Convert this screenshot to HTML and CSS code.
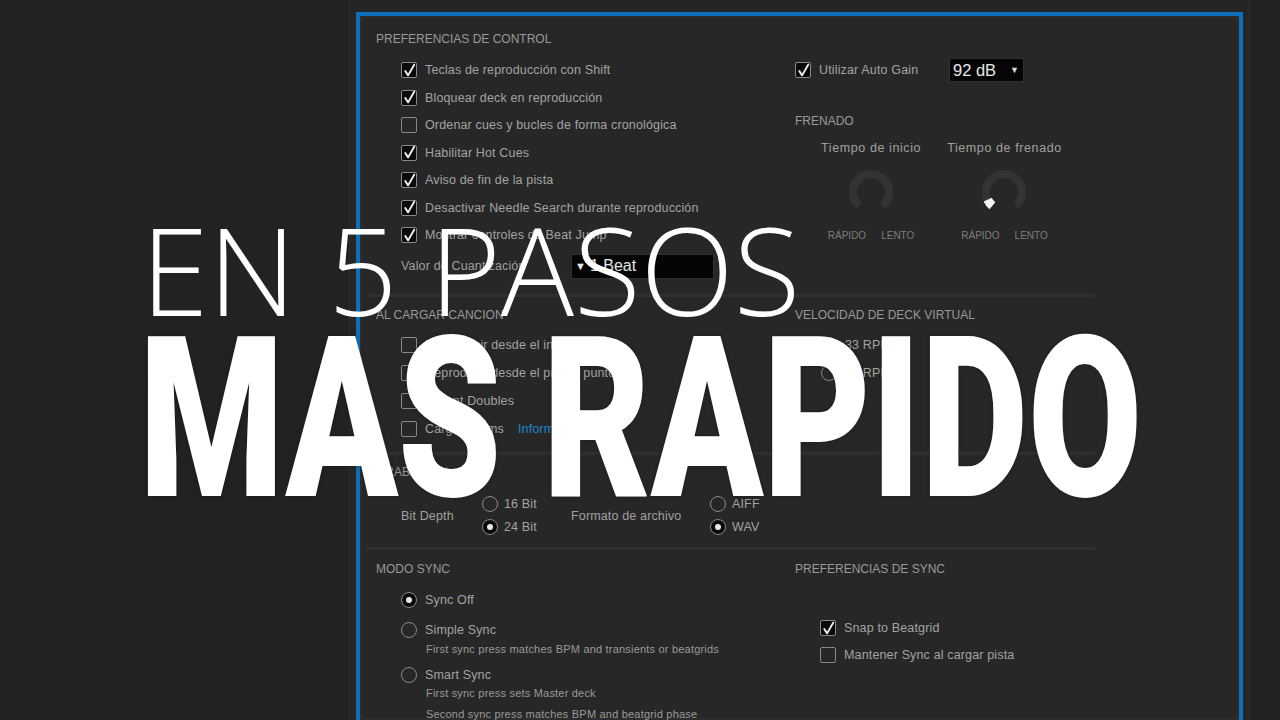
FILE: index.html
```html
<!DOCTYPE html>
<html lang="es">
<head>
<meta charset="utf-8">
<title>Preferencias</title>
<link rel="stylesheet" href="styles.css">
</head>
<body>
<div class="app">
  <div class="side"></div>
  <div class="main">
    <div class="panel">

      <section class="sec sec1">
        <div class="col left">
          <h3 class="hd">PREFERENCIAS DE CONTROL</h3>
          <ul class="opts">
            <li class="row"><span class="cb on"><svg viewBox="0 0 16 16"><polyline points="3.5,8.5 6.5,13.2 13,1.8"/></svg></span>Teclas de reproducción con Shift</li>
            <li class="row"><span class="cb on"><svg viewBox="0 0 16 16"><polyline points="3.5,8.5 6.5,13.2 13,1.8"/></svg></span>Bloquear deck en reproducción</li>
            <li class="row"><span class="cb"></span>Ordenar cues y bucles de forma cronológica</li>
            <li class="row"><span class="cb on"><svg viewBox="0 0 16 16"><polyline points="3.5,8.5 6.5,13.2 13,1.8"/></svg></span>Habilitar Hot Cues</li>
            <li class="row"><span class="cb on"><svg viewBox="0 0 16 16"><polyline points="3.5,8.5 6.5,13.2 13,1.8"/></svg></span>Aviso de fin de la pista</li>
            <li class="row"><span class="cb on"><svg viewBox="0 0 16 16"><polyline points="3.5,8.5 6.5,13.2 13,1.8"/></svg></span>Desactivar Needle Search durante reproducción</li>
            <li class="row"><span class="cb on"><svg viewBox="0 0 16 16"><polyline points="3.5,8.5 6.5,13.2 13,1.8"/></svg></span>Mostrar controles de Beat Jump</li>
          </ul>
          <div class="quant">
            <span class="qlabel">Valor de Cuantización</span>
            <span class="select wide"><span class="arr2">▼</span> 1 Beat</span>
          </div>
        </div>
        <div class="col right">
          <div class="autogain">
            <span class="cb on"><svg viewBox="0 0 16 16"><polyline points="3.5,8.5 6.5,13.2 13,1.8"/></svg></span>
            <span class="aglabel">Utilizar Auto Gain</span>
            <span class="select db"><span>92 dB</span><span class="arr">▼</span></span>
          </div>
          <h3 class="hd fren">FRENADO</h3>
          <div class="knobs">
            <div class="knob">
              <div class="ktitle">Tiempo de inicio</div>
              <svg class="kdial" viewBox="0 0 48 48"><path class="ring" d="M12.43 37.79 A18 18 0 1 1 35.57 37.79"/></svg>
              <div class="klabels"><span>RÁPIDO</span><span>LENTO</span></div>
            </div>
            <div class="knob">
              <div class="ktitle">Tiempo de frenado</div>
              <svg class="kdial" viewBox="0 0 48 48"><path class="ring" d="M12.43 37.79 A18 18 0 1 1 35.57 37.79"/><path class="ind" d="M12.43 37.79 A18 18 0 0 1 7.69 31.61"/></svg>
              <div class="klabels"><span>RÁPIDO</span><span>LENTO</span></div>
            </div>
          </div>
        </div>
      </section>
      <div class="sep"></div>

      <section class="sec sec2">
        <div class="col left">
          <h3 class="hd">AL CARGAR CANCION</h3>
          <ul class="opts">
            <li class="row r28"><span class="cb"></span>Reproducir desde el inicio</li>
            <li class="row r28"><span class="cb"></span>Reproducir desde el primer punto cue</li>
            <li class="row r28"><span class="cb"></span>Instant Doubles</li>
            <li class="row r28"><span class="cb"></span>Cargar Stems <a class="link">Información</a></li>
          </ul>
        </div>
        <div class="col right">
          <h3 class="hd">VELOCIDAD DE DECK VIRTUAL</h3>
          <ul class="opts ind26">
            <li class="row r28"><span class="rb"></span>33 RPM</li>
            <li class="row r28"><span class="rb"></span>45 RPM</li>
          </ul>
        </div>
      </section>
      <div class="sep"></div>

      <section class="sec sec3">
        <h3 class="hd">GRABACIÓN</h3>
        <div class="rec">
          <span class="reclabel bd">Bit Depth</span>
          <div class="rgroup g1">
            <div class="row r23"><span class="rb"></span>16 Bit</div>
            <div class="row r23"><span class="rb on"></span>24 Bit</div>
          </div>
          <span class="reclabel fm">Formato de archivo</span>
          <div class="rgroup">
            <div class="row r23"><span class="rb"></span>AIFF</div>
            <div class="row r23"><span class="rb on"></span>WAV</div>
          </div>
        </div>
      </section>
      <div class="sep"></div>

      <section class="sec sec4">
        <div class="col left">
          <h3 class="hd">MODO SYNC</h3>
          <div class="sync">
            <div class="row r26 s-off"><span class="rb on"></span>Sync Off</div>
            <div class="row r26 s-simple"><span class="rb"></span>Simple Sync</div>
            <p class="desc d1">First sync press matches BPM and transients or beatgrids</p>
            <div class="row r26 s-smart"><span class="rb"></span>Smart Sync</div>
            <p class="desc d2">First sync press sets Master deck</p>
            <p class="desc d3">Second sync press matches BPM and beatgrid phase</p>
          </div>
        </div>
        <div class="col right">
          <h3 class="hd">PREFERENCIAS DE SYNC</h3>
          <div class="syncprefs">
            <div class="row r26 snap"><span class="cb on"><svg viewBox="0 0 16 16"><polyline points="3.5,8.5 6.5,13.2 13,1.8"/></svg></span>Snap to Beatgrid</div>
            <div class="row r26 keep"><span class="cb"></span>Mantener Sync al cargar pista</div>
          </div>
        </div>
      </section>

    </div>
  </div>
  <div class="rest"></div>
</div>

<div class="title thin">EN 5 PASOS</div>
<div class="title bold">MAS RAPIDO</div>
</body>
</html>
```

FILE: styles.css
```css
* { box-sizing: border-box; }
html, body { margin: 0; padding: 0; }
body {
  width: 1280px;
  height: 720px;
  overflow: hidden;
  background: #222222;
  position: relative;
  font-family: "Liberation Sans", Arial, sans-serif;
  color: #a0a0a0;
}
.app { display: flex; height: 720px; }
.side { width: 350px; background: #222222; border-right: 1px solid #2c2c2c; }
.main {
  width: 900px;
  background: #252525;
  padding: 12px 6px 0 6px;
  border-right: 1px solid #2e2e2e;
}
.rest { flex: 1; background: #222222; }
.panel {
  height: 708px;
  border: 4px solid #0d6fba;
  border-bottom: none;
  background: #272727;
  box-shadow: inset 0 0 0 2px #2c2c2c;
  overflow: hidden;
}

.sec { display: flex; padding-left: 16px; }
.col.left { width: 419px; }
.col.right { flex: 1; }
.sep { width: 729px; height: 3px; margin-left: 6px; background: #2f2f2f; }

.hd {
  margin: 0;
  font-size: 12px;
  line-height: 16px;
  font-weight: normal;
  color: #999999;
  white-space: nowrap;
}

ul.opts { list-style: none; margin: 0; padding: 0 0 0 25px; }
.row {
  display: flex;
  align-items: center;
  gap: 8px;
  height: 27.5px;
  font-size: 12.5px;
  letter-spacing: 0.15px;
  white-space: nowrap;
  color: #a3a3a3;
}
.r28 { height: 28px; }
.r23 { height: 23px; }
.r26 { height: 26px; }

.cb {
  flex: none;
  width: 16px;
  height: 16px;
  border: 1.5px solid #8a8a8a;
  border-radius: 2px;
  display: inline-flex;
  align-items: center;
  justify-content: center;
  overflow: visible;
}
.cb.on { background: #0a0a0a; }
.cb svg { width: 15px; height: 15px; overflow: visible; }
.cb polyline { fill: none; stroke: #f2f2f2; stroke-width: 2; stroke-linejoin: round; stroke-linecap: round; }

.rb {
  flex: none;
  width: 16px;
  height: 16px;
  border: 1.5px solid #8a8a8a;
  border-radius: 50%;
  display: inline-flex;
  align-items: center;
  justify-content: center;
}
.rb.on { background: #0a0a0a; }
.rb.on::after {
  content: "";
  width: 6px;
  height: 6px;
  border-radius: 50%;
  background: #e8e8e8;
}

.link { color: #1a86d0; margin-left: 6px; }

/* section 1 */
.sec1 { height: 278px; padding-top: 15px; }
.sec1 .opts { margin-top: 9.25px; }
.quant {
  margin-top: 3.25px;
  height: 28px;
  display: flex;
  align-items: center;
  padding-left: 25px;
  font-size: 12.5px;
  letter-spacing: 0.15px;
}
.qlabel { width: 170px; }
.select {
  background: #050505;
  border: 1px solid #303030;
  color: #e6e6e6;
  display: inline-flex;
  align-items: center;
  height: 25px;
  font-size: 16px;
  letter-spacing: 0;
}
.select.wide { width: 143px; padding-left: 3px; gap: 4px; }
.select .arr2 { font-size: 11px; }

.autogain {
  margin-top: 27px;
  height: 24px;
  display: flex;
  align-items: center;
  font-size: 12.5px;
  letter-spacing: 0.15px;
  color: #a3a3a3;
}
.aglabel { width: 138px; padding-left: 8px; }
.select.db {
  width: 75px;
  height: 24px;
  padding: 0 4px 0 3px;
  justify-content: space-between;
  font-size: 16.5px;
}
.select.db .arr { font-size: 9px; color: #d8d8d8; }

.hd.fren { margin-top: 31px; }
.knobs { display: flex; gap: 26px; margin-top: 11px; padding-left: 26px; }
.knob { display: flex; flex-direction: column; align-items: center; }
.ktitle { font-size: 12.5px; letter-spacing: 0.6px; line-height: 16px; white-space: nowrap; color: #a0a0a0; }
.kdial { width: 48px; height: 48px; margin-top: 12px; display: block; }
.kdial .ring { fill: none; stroke: #333333; stroke-width: 8; }
.kdial .ind { fill: none; stroke: #f4f4f4; stroke-width: 9; }
.klabels {
  margin-top: 13px;
  height: 14px;
  display: flex;
  gap: 15px;
  font-size: 10px;
  line-height: 14px;
  color: #7c7c7c;
}

/* section 2 */
.sec2 { height: 155px; padding-top: 10px; }
.sec2 .opts { margin-top: 8px; }
.ind26 { padding-left: 26px !important; }

/* section 3 */
.sec3 { height: 92px; padding-top: 9px; flex-direction: column; }
.rec { display: flex; align-items: center; margin-top: 12.5px; padding-left: 25px; }
.reclabel { font-size: 12.5px; letter-spacing: 0.15px; color: #a0a0a0; }
.reclabel.bd { width: 81px; }
.reclabel.fm { width: 139px; }
.rgroup.g1 { width: 89px; }
.rgroup .row { gap: 6px; }

/* section 4 */
.sec4 { height: 170px; padding-top: 11px; }
.sync { padding-left: 25px; }
.s-off { margin-top: 10px; }
.s-simple { margin-top: 4px; }
.desc {
  margin: 0;
  padding-left: 25px;
  font-size: 11px;
  letter-spacing: 0.2px;
  white-space: nowrap;
  color: #9a9a9a;
}
.d1 { line-height: 12px; }
.s-smart { margin-top: 7px; }
.d2 { line-height: 16px; margin-top: -3px; }
.d3 { line-height: 16px; margin-top: 5px; }
.syncprefs { padding-left: 25px; }
.snap { margin-top: 38px; }
.keep { margin-top: 1px; }

/* big overlay titles */
.title {
  position: absolute;
  color: #ffffff;
  white-space: nowrap;
  line-height: 1;
}
.title.thin {
  left: 141px;
  top: 208px;
  font-family: "Open Sans", sans-serif;
  font-weight: 300;
  font-size: 122px;
}
.title.bold {
  left: 139px;
  top: 307px;
  font-family: Roboto, "Liberation Sans", sans-serif;
  font-weight: 900;
  font-size: 225px;
  transform: scaleX(0.735);
  transform-origin: 0 0;
  text-shadow: 0 0 6px rgba(0,0,0,0.25);
}
```
